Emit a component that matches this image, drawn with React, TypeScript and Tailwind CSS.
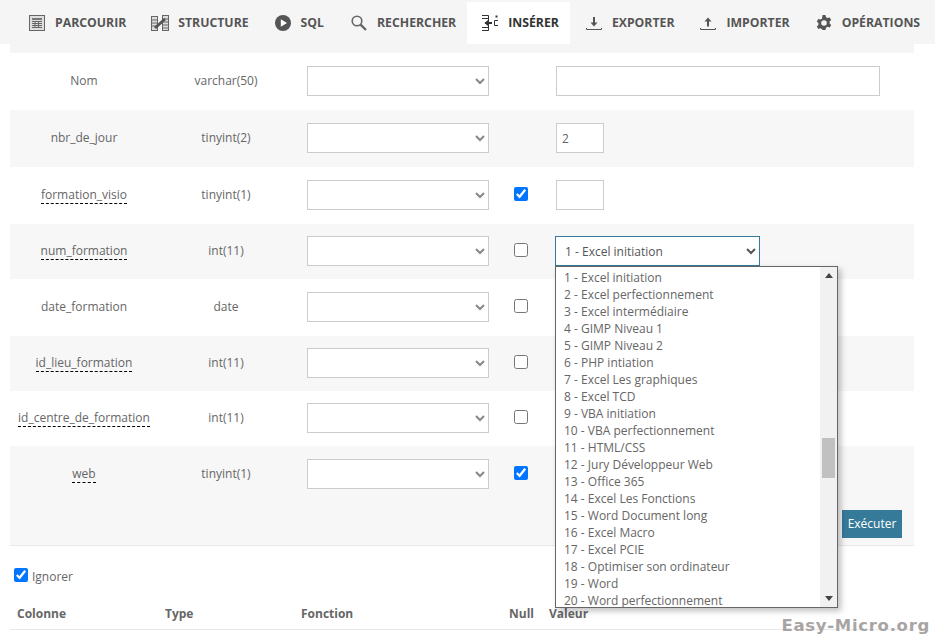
import { ReactNode } from "react";

const TableIcon = () => (
  <svg width="16" height="16" viewBox="0 0 16 16" className="shrink-0">
    <rect x="0.5" y="0.5" width="15" height="15" fill="#dedede" stroke="#666" />
    <rect x="3" y="3" width="10" height="2" fill="#777" />
    <path d="M3 6.5h10M3 8.5h10M3 10.5h10M3 12.5h10M6 6v7M9.5 6v7" stroke="#666" strokeWidth="1" fill="none" />
  </svg>
);

const StructureIcon = () => (
  <svg width="18" height="16" viewBox="0 0 18 16" className="shrink-0">
    <rect x="0.5" y="1.5" width="6" height="14" fill="#ddd" stroke="#666" />
    <path d="M0.5 5h6M0.5 8h6M0.5 11h6" stroke="#666" fill="none" />
    <rect x="11.5" y="0.5" width="6" height="15" fill="#ddd" stroke="#666" />
    <path d="M11.5 4h6M11.5 7h6M11.5 10h6M11.5 13h6" stroke="#666" fill="none" />
    <path d="M4 13L14 4" stroke="#555" strokeWidth="3" fill="none" />
  </svg>
);

const SqlIcon = () => (
  <svg width="16" height="16" viewBox="0 0 16 16" className="shrink-0">
    <circle cx="8" cy="8" r="8" fill="#555" />
    <path d="M5.8 4.2L12 8l-6.2 3.8z" fill="#fff" />
  </svg>
);

const SearchIcon = () => (
  <svg width="16" height="16" viewBox="0 0 16 16" className="shrink-0" fill="none">
    <circle cx="6" cy="6" r="4.8" stroke="#666" strokeWidth="1.6" />
    <path d="M9.6 9.6L15 15" stroke="#666" strokeWidth="2.4" />
  </svg>
);

const InsertIcon = () => (
  <svg width="16" height="16" viewBox="0 0 16 16" className="shrink-0" fill="none">
    <path d="M0 0.5h6.5v15H0M0 3.5h6.5M0 12.5h6.5" stroke="#333" strokeWidth="1" />
    <path d="M3 8h7" stroke="#333" strokeWidth="2" />
    <path d="M6 5L2.5 8 6 11z" fill="#333" />
    <path d="M16 5.5h-3.5v5H16" stroke="#333" strokeWidth="1" />
    <rect x="13.5" y="0.5" width="2" height="2" fill="#333" />
  </svg>
);

const ExportIcon = () => (
  <svg width="16" height="16" viewBox="0 0 16 16" className="shrink-0" fill="none">
    <path d="M8 2v6" stroke="#555" strokeWidth="2" />
    <path d="M4.5 7.5h7L8 11.5z" fill="#555" />
    <path d="M0.5 13v1.5h15V13" stroke="#555" strokeWidth="1" />
  </svg>
);

const ImportIcon = () => (
  <svg width="16" height="16" viewBox="0 0 16 16" className="shrink-0" fill="none">
    <path d="M8 11.5V6" stroke="#555" strokeWidth="2" />
    <path d="M4.5 6.5h7L8 2.5z" fill="#555" />
    <path d="M0.5 13v1.5h15V13" stroke="#555" strokeWidth="1" />
  </svg>
);

const GearIcon = () => (
  <svg width="16" height="16" viewBox="0 0 16 16" className="shrink-0">
    <path
      fillRule="evenodd"
      d="M6.5 0h3l.5 2.2 1.6.9 2.1-.7 1.5 2.6-1.6 1.5v1.9l1.6 1.5-1.5 2.6-2.1-.7-1.6.9-.5 2.3h-3L6 14.2l-1.6-.9-2.1.7L.8 11.4l1.6-1.5V8L.8 6.5 2.3 3.9l2.1.7L6 3.7zM8 5.2a2.8 2.8 0 100 5.6 2.8 2.8 0 000-5.6z"
      fill="#555"
    />
  </svg>
);

const tabs: { label: string; icon: ReactNode; active?: boolean; space: string }[] = [
  { label: "Parcourir", icon: <TableIcon />, space: "gap-[10px] pl-[15px] pr-[10px]" },
  { label: "Structure", icon: <StructureIcon />, space: "gap-[9px] pl-[15px] pr-[11px]" },
  { label: "SQL", icon: <SqlIcon />, space: "gap-[10px] pl-[15px] pr-[12px]" },
  { label: "Rechercher", icon: <SearchIcon />, space: "gap-[10px] pl-[15px] pr-[11px]" },
  { label: "Insérer", icon: <InsertIcon />, active: true, space: "gap-[10px] pl-[15px] pr-[11px]" },
  { label: "Exporter", icon: <ExportIcon />, space: "gap-[10px] pl-[16px] pr-[11px]" },
  { label: "Importer", icon: <ImportIcon />, space: "gap-[10px] pl-[15px] pr-[11px]" },
  { label: "Opérations", icon: <GearIcon />, space: "gap-[10px] pl-[15px] pr-[11px]" },
];

const formations = [
  "1 - Excel initiation",
  "2 - Excel perfectionnement",
  "3 - Excel intermédiaire",
  "4 - GIMP Niveau 1",
  "5 - GIMP Niveau 2",
  "6 - PHP intiation",
  "7 - Excel Les graphiques",
  "8 - Excel TCD",
  "9 - VBA initiation",
  "10 - VBA perfectionnement",
  "11 - HTML/CSS",
  "12 - Jury Développeur Web",
  "13 - Office 365",
  "14 - Excel Les Fonctions",
  "15 - Word Document long",
  "16 - Excel Macro",
  "17 - Excel PCIE",
  "18 - Optimiser son ordinateur",
  "19 - Word",
  "20 - Word perfectionnement",
];

const FormationList = () => (
  <div className="absolute left-0 top-[30px] z-10 flex h-[342px] w-[283px] border border-[#666] bg-white shadow-[3px_3px_6px_rgba(0,0,0,0.25)]">
    <div className="flex-1 overflow-hidden pl-2 pt-[2px]">
      {formations.map((f) => (
        <div key={f} className="h-[17px] whitespace-nowrap leading-[17px]">
          {f}
        </div>
      ))}
    </div>
    <div className="flex w-[17px] flex-col items-center justify-between bg-[#f1f1f1] py-[6px]">
      <svg width="8" height="5" viewBox="0 0 8 5"><path d="M4 0l4 5H0z" fill="#444" /></svg>
      <svg width="8" height="5" viewBox="0 0 8 5"><path d="M0 0h8L4 5z" fill="#444" /></svg>
    </div>
    <div className="absolute right-[2px] top-[171px] h-[40px] w-[13px] bg-[#c1c1c1]" />
  </div>
);

const TextBox = ({ w, value }: { w: string; value?: string }) => (
  <input
    readOnly
    value={value ?? ""}
    className={`mb-px h-[30px] ${w} border border-[#cccccc] bg-white px-[5px] text-[#666] outline-none`}
  />
);

type Row = {
  name: string;
  type: string;
  dashed?: boolean;
  nul?: boolean;
  checked?: boolean;
  height: string;
  gray?: boolean;
  value?: ReactNode;
};

const rows: Row[] = [
  { name: "Nom", type: "varchar(50)", height: "h-[57px]", value: <TextBox w="w-[324px]" /> },
  { name: "nbr_de_jour", type: "tinyint(2)", height: "h-[57px]", gray: true, value: <TextBox w="w-[48px]" value="2" /> },
  { name: "formation_visio", type: "tinyint(1)", dashed: true, nul: true, checked: true, height: "h-[57px]", value: <TextBox w="w-[48px]" /> },
  {
    name: "num_formation",
    type: "int(11)",
    dashed: true,
    nul: true,
    height: "h-[55px]",
    gray: true,
    value: (
      <div className="relative -ml-px mb-px flex">
        <select className="h-[30px] w-[205px] rounded-none border border-[#367a9a] bg-white pl-[5px] pr-[2px] text-[#555] outline-none">
          <option>1 - Excel initiation</option>
        </select>
        <FormationList />
      </div>
    ),
  },
  { name: "date_formation", type: "date", nul: true, height: "h-[57px]" },
  { name: "id_lieu_formation", type: "int(11)", dashed: true, nul: true, height: "h-[55px]", gray: true },
  { name: "id_centre_de_formation", type: "int(11)", dashed: true, nul: true, height: "h-[55px]" },
];

const Cells = ({ r }: { r: Row }) => (
  <>
    <div className="mb-px w-[148px] text-center">
      <span className={r.dashed ? "border-b border-dashed border-black" : ""}>{r.name}</span>
    </div>
    <div className="mb-px w-[136px] text-center">{r.type}</div>
    <div className="mb-px ml-[13px] flex w-[182px] shrink-0">
      <select className="h-[30px] w-[182px] rounded-none border border-[#cccccc] bg-white pr-[2px] text-[#888] outline-none">
        <option></option>
      </select>
    </div>
    <div className="mb-[3px] mr-[3px] flex h-[14px] w-[64px] justify-center">
      {r.nul && (
        <input type="checkbox" readOnly checked={!!r.checked} className="m-0 h-[14px] w-[14px]" />
      )}
    </div>
    {r.value}
  </>
);

export default function App() {
  return (
    <div
      className="relative h-[638px] w-[935px] overflow-hidden bg-white text-[12px] text-[#666]"
      style={{ fontFamily: '"Open Sans", sans-serif' }}
    >
      <nav className="flex h-[44px] items-end bg-[#f5f5f5] pl-[14px]">
        {tabs.map((t) => (
          <div
            key={t.label}
            className={`flex h-[42px] items-center text-[12.25px] font-bold uppercase ${t.space} ${
              t.active ? "bg-white text-[#333]" : "text-[#555]"
            }`}
          >
            {t.icon}
            {t.label}
          </div>
        ))}
      </nav>

      <div className="ml-[10px] w-[904px]">
        <div className="h-[9px] bg-[#f5f5f5]" />
        {rows.map((r) => (
          <div key={r.name} className={`flex items-center ${r.height} ${r.gray ? "bg-[#f7f7f7]" : ""}`}>
            <Cells r={r} />
          </div>
        ))}
        <div className="h-[100px] border-b border-[#e8e8e8] bg-[#f7f7f7]">
          <div className="flex h-[56px] items-center">
            <Cells r={{ name: "web", type: "tinyint(1)", dashed: true, nul: true, checked: true, height: "" }} />
          </div>
          <div className="flex justify-end pr-3 pt-[8px]">
            <button className="h-[28px] w-[60px] bg-[#367a9a] text-white">Exécuter</button>
          </div>
        </div>
      </div>

      <div className="ml-[14px] mt-[22px] flex items-center gap-[4px]">
        <input type="checkbox" readOnly checked className="m-0 mb-[4px] h-[14px] w-[14px]" />
        <span>Ignorer</span>
      </div>

      <div className="ml-[10px] mt-[19px] flex h-[25px] w-[904px] items-start border-b border-[#e8e8e8] font-bold">
        <div className="w-[155px] pl-[7px]">Colonne</div>
        <div className="w-[136px]">Type</div>
        <div className="w-[208px]">Fonction</div>
        <div className="w-[40px]">Null</div>
        <div>Valeur</div>
      </div>

      <div
        className="absolute bottom-[-1px] right-[5px] text-[16.5px] font-bold tracking-[0.7px] text-[#a8a4a4]"
        style={{ fontFamily: '"DejaVu Sans", sans-serif' }}
      >
        Easy-Micro.org
      </div>
    </div>
  );
}
